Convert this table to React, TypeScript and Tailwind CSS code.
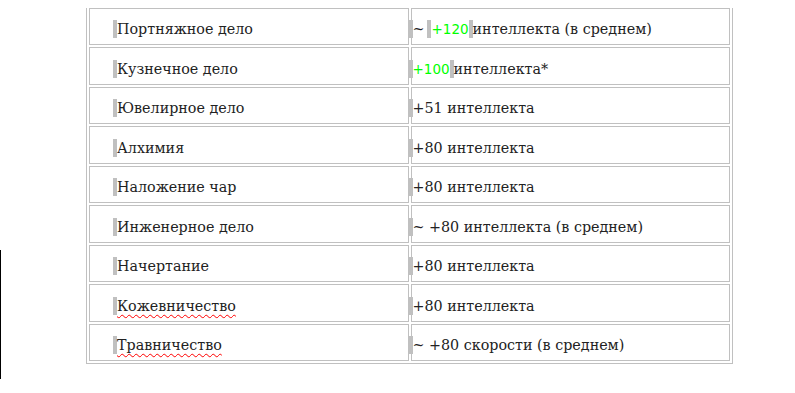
const rows: { name: string; spell?: boolean; value: React.ReactNode }[] = [
  {
    name: "Портняжное дело",
    value: (
      <>
        <Mark />~<span className="ml-[3px]" />
        <Mark />
        <Green>+120</Green>
        <Mark />
        интеллекта (в среднем)
      </>
    ),
  },
  {
    name: "Кузнечное дело",
    value: (
      <>
        <Mark />
        <Green>+100</Green>
        <Mark />
        интеллекта*
      </>
    ),
  },
  { name: "Ювелирное дело", value: <><Mark />+51 интеллекта</> },
  { name: "Алхимия", value: <><Mark />+80 интеллекта</> },
  { name: "Наложение чар", value: <><Mark />+80 интеллекта</> },
  { name: "Инженерное дело", value: <><Mark />~ +80 интеллекта (в среднем)</> },
  { name: "Начертание", value: <><Mark />+80 интеллекта</> },
  { name: "Кожевничество", spell: true, value: <><Mark />+80 интеллекта</> },
  { name: "Травничество", spell: true, value: <><Mark />~ +80 скорости (в среднем)</> },
];

function Mark() {
  return <span className="inline-block h-[18px] w-[4px] bg-[#c0c0c0] align-[-4px]" />;
}

function Green({ children }: { children: React.ReactNode }) {
  return (
    <span className="text-[13.5px] text-[#00ff00] [font-family:'DejaVu_Sans',sans-serif]">{children}</span>
  );
}

export default function App() {
  return (
    <div className="relative h-[393px] w-[795px] overflow-hidden bg-white">
      <div className="absolute left-0 top-[250px] h-[129px] w-px bg-black" />
      <div className="ml-[86px] mt-[8px] h-[357px] overflow-hidden">
        <table className="-mt-[3.5px] w-[647px] table-fixed border-separate border-spacing-[2px] border border-[#c0c0c0] text-[14.3px] text-[#222] [font-family:'DejaVu_Serif',serif]">
          <tbody>
            {rows.map((r) => (
              <tr key={r.name}>
                <td className="h-[37.5px] border border-[#c0c0c0] p-0 pl-[23px] pt-[7px] whitespace-nowrap">
                  <Mark />
                  <span className={r.spell ? "underline decoration-wavy decoration-[#ff0000] decoration-1 underline-offset-[3px]" : ""}>
                    {r.name}
                  </span>
                </td>
                <td className="h-[37.5px] border border-[#c0c0c0] p-0 pt-[7px] whitespace-nowrap">
                  <span className="-ml-[3px]">{r.value}</span>
                </td>
              </tr>
            ))}
          </tbody>
        </table>
      </div>
    </div>
  );
}
